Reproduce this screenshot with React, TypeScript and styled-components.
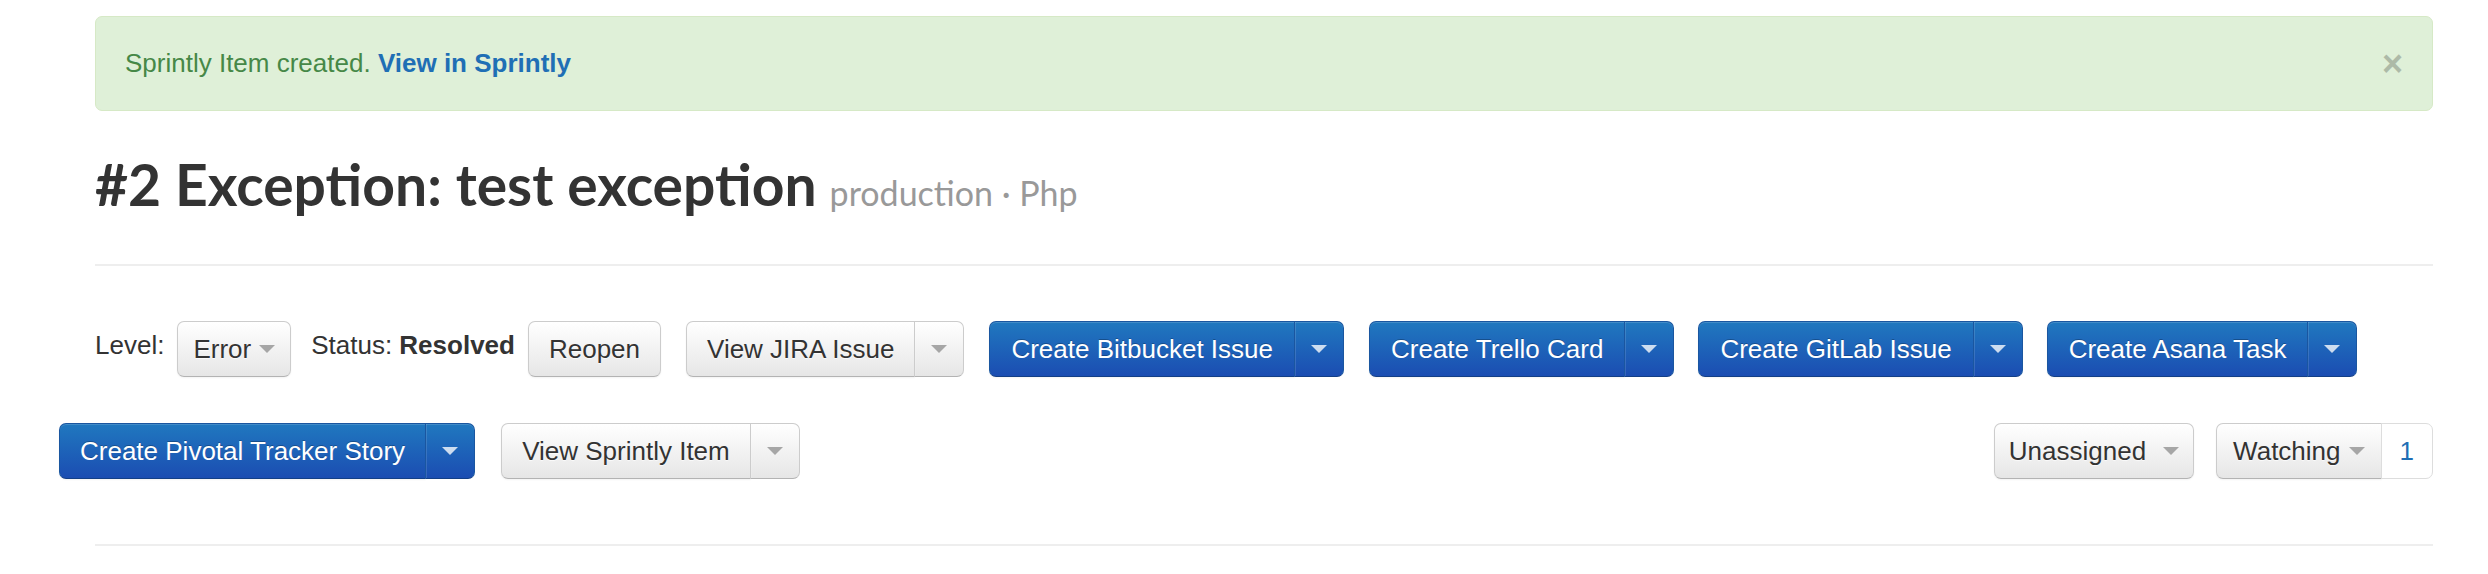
import React from "react";
import styled, { createGlobalStyle, css } from "styled-components";

const GlobalStyle = createGlobalStyle`
  html, body { margin: 0; padding: 0; background: #fff; }
  body {
    font-family: "Liberation Sans", Arial, Helvetica, sans-serif;
    font-size: 26px;
    color: #333;
  }
`;

const Page = styled.div`
  width: 2338px;
  padding: 16px 0 0 95px;
`;

const Alert = styled.div`
  box-sizing: border-box;
  display: flex;
  align-items: center;
  justify-content: space-between;
  height: 95px;
  padding: 0 29px 0 29px;
  background: #dff0d8;
  border: 1px solid #d6e9c6;
  border-radius: 7px;
  color: #468847;
  line-height: 37px;
`;

const AlertLink = styled.a`
  color: #1f6fb5;
  font-weight: 700;
  text-decoration: none;
`;

const Close = styled.button`
  border: 0;
  background: none;
  padding: 0;
  font: 700 36px/37px "Liberation Sans", Arial, sans-serif;
  color: #000;
  opacity: 0.22;
  cursor: pointer;
`;

const Title = styled.h1`
  margin: 39px 0 0;
  font-family: Lato, "Liberation Sans", sans-serif;
  font-weight: 700;
  font-size: 57px;
  line-height: 68px;
  color: #333;
`;

const TitleMeta = styled.small`
  margin-left: 13px;
  font-family: Lato, "Liberation Sans", sans-serif;
  font-weight: 400;
  font-size: 34px;
  color: #999;
`;

const Divider = styled.hr<{ $top: number }>`
  margin: ${(p) => p.$top}px 0 0;
  border: 0;
  height: 2px;
  background: #eee;
`;

const Toolbar = styled.div<{ $top: number; $shift?: number }>`
  display: flex;
  align-items: flex-start;
  gap: 13px;
  margin-top: ${(p) => p.$top}px;
  margin-left: ${(p) => -(p.$shift ?? 0)}px;
`;

const ToolbarSide = styled.div<{ $gap: number }>`
  display: flex;
  align-items: flex-start;
  gap: ${(p) => p.$gap}px;
`;

const Spacer = styled.div`
  flex: 1;
`;

const Label = styled.span<{ $ml?: number }>`
  padding-top: 5px;
  line-height: 38px;
  margin-left: ${(p) => p.$ml ?? 0}px;
  white-space: nowrap;
`;

const Strong = styled.b`
  font-weight: 700;
`;

const primary = css`
  color: #fff;
  text-shadow: 0 -1px 0 rgba(0, 0, 0, 0.25);
  background: linear-gradient(to bottom, #2078bf, #1b4db2);
  border-color: #1a56a0 #1a56a0 #133f86;
  box-shadow: inset 0 1px 0 rgba(255, 255, 255, 0.15), 0 1px 2px rgba(0, 0, 0, 0.05);
`;

const plain = css`
  color: #333;
  text-shadow: 0 1px 1px rgba(255, 255, 255, 0.75);
  background: linear-gradient(to bottom, #ffffff, #e6e6e6);
  border-color: #cccccc #cccccc #b3b3b3;
  box-shadow: inset 0 1px 0 rgba(255, 255, 255, 0.2), 0 1px 2px rgba(0, 0, 0, 0.05);
`;

const Btn = styled.button<{ $primary?: boolean; $pad?: number; $gap?: number }>`
  box-sizing: border-box;
  display: inline-flex;
  align-items: center;
  gap: ${(p) => p.$gap ?? 8}px;
  height: 56px;
  margin: 0;
  padding: 0 ${(p) => p.$pad ?? 20}px;
  font: 400 26px/38px "Liberation Sans", Arial, Helvetica, sans-serif;
  white-space: nowrap;
  border: 1px solid;
  border-radius: 7px;
  cursor: pointer;
  ${(p) => (p.$primary ? primary : plain)}
`;

const Toggle = styled(Btn)`
  padding: 0 16px;
  box-shadow: inset 1px 0 0 rgba(255, 255, 255, 0.125), inset 0 1px 0 rgba(255, 255, 255, 0.15);
`;

const Caret = styled.span<{ $light?: boolean }>`
  display: inline-block;
  width: 0;
  height: 0;
  border-top: 8px solid ${(p) => (p.$light ? "rgba(255,255,255,0.78)" : "#a6a6a6")};
  border-left: 8px solid transparent;
  border-right: 8px solid transparent;
`;

const BtnGroup = styled.div<{ $ml?: number }>`
  display: inline-flex;
  margin-left: ${(p) => p.$ml ?? 0}px;
  & > *:not(:last-child) {
    border-top-right-radius: 0;
    border-bottom-right-radius: 0;
  }
  & > *:not(:first-child) {
    border-top-left-radius: 0;
    border-bottom-left-radius: 0;
    margin-left: -1px;
  }
`;

const Count = styled.span`
  box-sizing: border-box;
  display: inline-flex;
  align-items: center;
  height: 56px;
  padding: 0 18px;
  background: #fff;
  border: 1px solid #dddddd;
  border-radius: 0 7px 7px 0;
  color: #1f6fb5;
  line-height: 38px;
`;

type SplitProps = { label: string; primary?: boolean; ml?: number; pad?: number };

const SplitButton = ({ label, primary, ml, pad }: SplitProps) => (
  <BtnGroup $ml={ml}>
    <Btn $primary={primary} $pad={pad}>
      {label}
    </Btn>
    <Toggle $primary={primary} aria-label="more">
      <Caret $light={primary} />
    </Toggle>
  </BtnGroup>
);

export default function App() {
  return (
    <>
      <GlobalStyle />
      <Page>
        <Alert>
          <span>
            Sprintly Item created. <AlertLink href="#">View in Sprintly</AlertLink>
          </span>
          <Close aria-label="close">×</Close>
        </Alert>

        <Title>
          #2 Exception: test exception
          <TitleMeta>production · Php</TitleMeta>
        </Title>

        <Divider $top={37} />

        <Toolbar $top={55}>
          <Label>Level:</Label>
          <Btn $pad={15}>
            Error <Caret />
          </Btn>
          <Label $ml={7}>
            Status: <Strong>Resolved</Strong>
          </Label>
          <Btn>Reopen</Btn>
          <SplitButton label="View JIRA Issue" ml={12} />
          <SplitButton label="Create Bitbucket Issue" primary ml={12} pad={21} />
          <SplitButton label="Create Trello Card" primary ml={12} pad={21} />
          <SplitButton label="Create GitLab Issue" primary ml={11} pad={21} />
          <SplitButton label="Create Asana Task" primary ml={11} pad={21} />
        </Toolbar>

        <Toolbar $top={46} $shift={36}>
          <ToolbarSide $gap={26}>
            <SplitButton label="Create Pivotal Tracker Story" primary />
            <SplitButton label="View Sprintly Item" />
          </ToolbarSide>
          <Spacer />
          <ToolbarSide $gap={22}>
            <Btn $pad={14} $gap={17}>
              Unassigned <Caret />
            </Btn>
            <BtnGroup>
              <Btn $pad={16}>
                Watching <Caret />
              </Btn>
              <Count>1</Count>
            </BtnGroup>
          </ToolbarSide>
        </Toolbar>

        <Divider $top={65} />
      </Page>
    </>
  );
}
